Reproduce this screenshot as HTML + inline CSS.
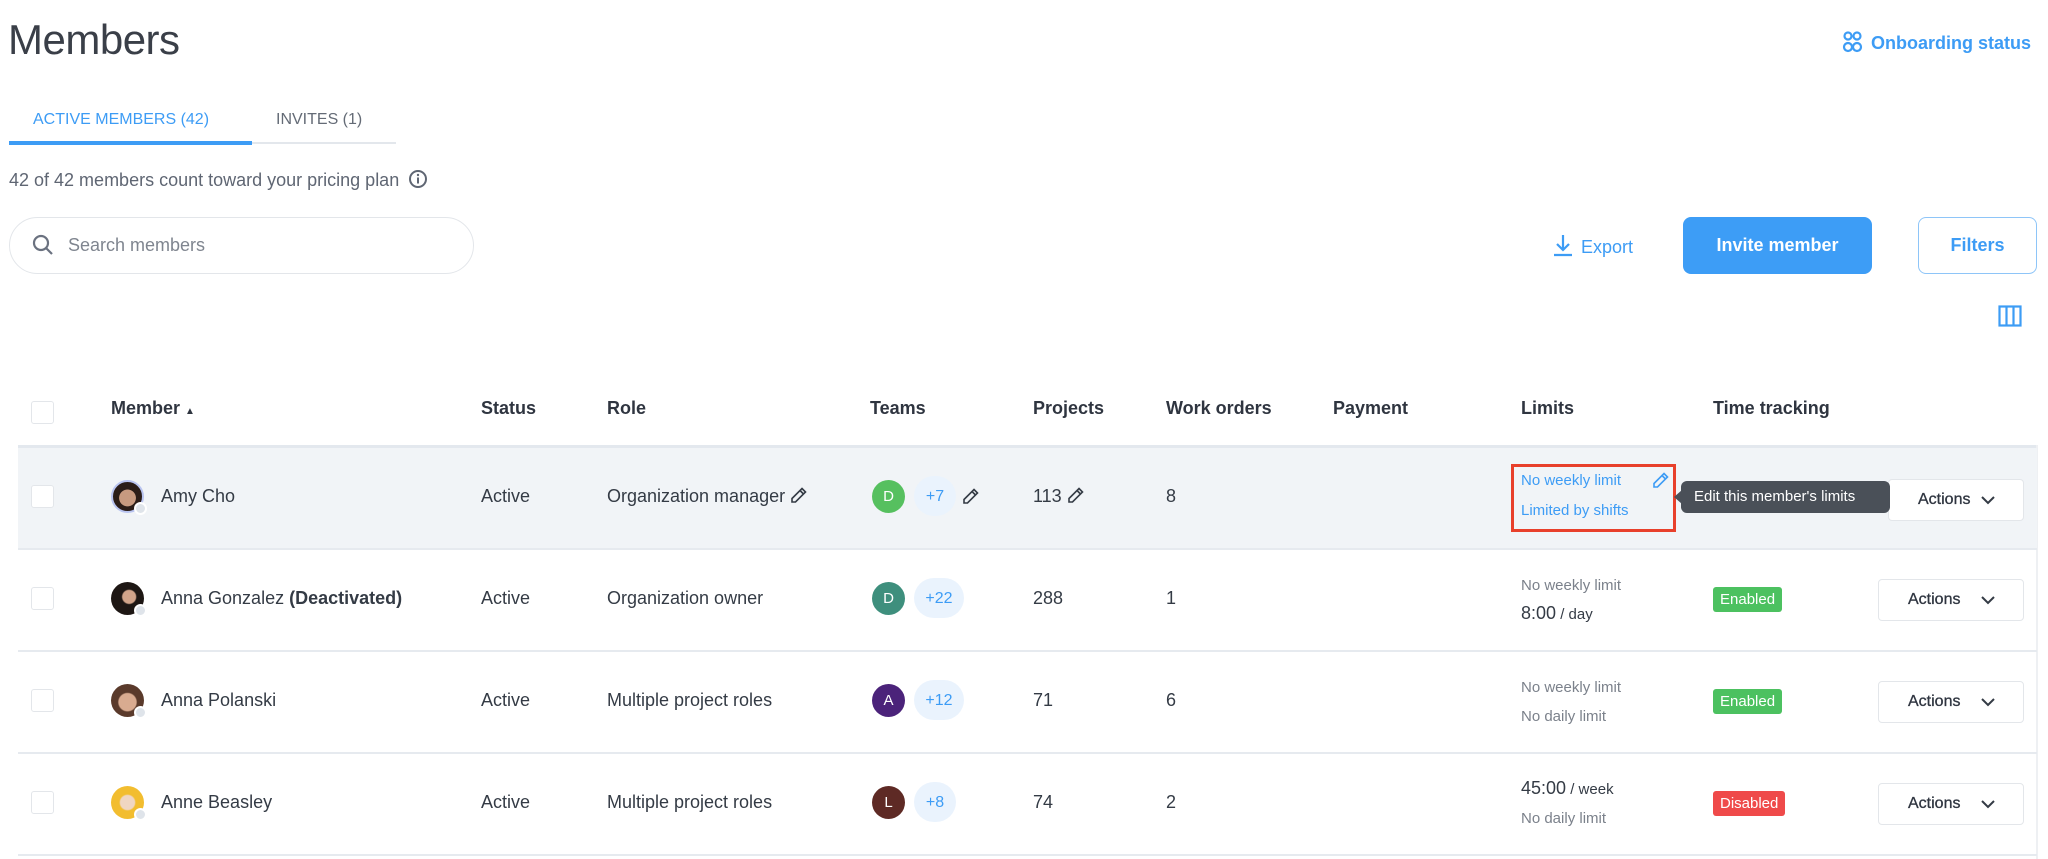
<!DOCTYPE html>
<html><head><meta charset="utf-8">
<style>
*{box-sizing:border-box;margin:0;padding:0}
body{width:2048px;height:859px;background:#fff;font-family:"Liberation Sans",Arial,sans-serif;color:#333a44;position:relative;overflow:hidden}
.a{position:absolute;white-space:nowrap}
.blue{color:#3d9cf5}
.hdr{font-size:18px;font-weight:bold;color:#2f3540;top:398px}
.row{position:absolute;left:18px;width:2019px;height:102px;border-bottom:2px solid #e6eaef}
.cb{position:absolute;left:13px;width:23px;height:23px;border:1px solid #e3e6ea;border-radius:3px;background:#fff}
.cell{position:absolute;font-size:18px;color:#343b45;white-space:nowrap}
.av{position:absolute;width:33px;height:33px;border-radius:50%}
.dot{position:absolute;width:13px;height:13px;border-radius:50%;background:#dfe4ea;border:2px solid #fff}
.tm{position:absolute;width:33px;height:33px;border-radius:50%;color:#fff;font-size:15px;text-align:center;line-height:33px}
.pill{position:absolute;height:40px;border-radius:20px;background:#eaf3fd;color:#3d9cf5;font-size:16px;text-align:center;line-height:42px}
.lim{position:absolute;font-size:15px;color:#7b818b;white-space:nowrap}
.badge{position:absolute;height:25px;border-radius:3px;color:#fff;font-size:15px;line-height:25px;padding:0 7px}
.act{position:absolute;left:1860px;width:146px;height:42px;border:1px solid #e3e6ea;border-radius:4px;background:#fff;font-size:16px;color:#2f3540;padding-left:29px;line-height:40px;-webkit-text-stroke:0.3px #2f3540}
.act svg{position:absolute;right:28px;top:15px}
.pen{display:inline-block;vertical-align:-2px}
</style></head><body>

<div class="a" style="left:8px;top:16px;font-size:42px;letter-spacing:-0.5px;color:#3a3f48">Members</div>

<div class="a blue" style="left:1841px;top:30px;font-size:18px;font-weight:bold">
<svg width="24" height="24" viewBox="0 0 24 24" style="vertical-align:-5px;margin-right:6px" fill="none" stroke="#3d9cf5" stroke-width="2.2"><circle cx="7" cy="6" r="3.5"/><circle cx="16" cy="6" r="3.5"/><circle cx="7" cy="17" r="4"/><circle cx="16" cy="17" r="4"/></svg>Onboarding status</div>

<div class="a blue" style="left:33px;top:111px;font-size:16px">ACTIVE MEMBERS (42)</div>
<div class="a" style="left:276px;top:111px;font-size:16px;color:#646b76">INVITES (1)</div>
<div class="a" style="left:9px;top:142px;width:387px;height:2px;background:#e3e7ec"></div>
<div class="a" style="left:9px;top:141px;width:243px;height:4px;background:#3d9cf5"></div>

<div class="a" style="left:9px;top:169px;font-size:18px;color:#5f6673">42 of 42 members count toward your pricing plan
<svg width="20" height="20" viewBox="0 0 20 20" style="vertical-align:-3px;margin-left:4px"><circle cx="10" cy="10" r="8" fill="none" stroke="#5f6673" stroke-width="2"/><rect x="9" y="8.5" width="2" height="6" fill="#5f6673"/><circle cx="10" cy="6" r="1.2" fill="#5f6673"/></svg></div>

<div class="a" style="left:9px;top:217px;width:465px;height:57px;border:1px solid #e3e6ea;border-radius:29px">
<svg width="22" height="22" viewBox="0 0 22 22" style="position:absolute;left:22px;top:16px" fill="none" stroke="#6b7280" stroke-width="2.2"><circle cx="9" cy="9" r="7"/><path d="M14 14l6 6"/></svg>
<span style="position:absolute;left:58px;top:17px;font-size:18px;color:#7f858f">Search members</span></div>

<div class="a blue" style="left:1551px;top:233px;font-size:18px">
<svg width="24" height="24" viewBox="0 0 24 24" style="vertical-align:-4px;margin-right:6px" fill="none" stroke="#3d9cf5" stroke-width="2.2"><path d="M12 2v15M6 11l6 6 6-6M3 22h18"/></svg>Export</div>

<div class="a" style="left:1683px;top:217px;width:189px;height:57px;border-radius:8px;background:#3d9df6;color:#fff;font-size:18px;font-weight:bold;text-align:center;line-height:57px">Invite member</div>
<div class="a blue" style="left:1918px;top:217px;width:119px;height:57px;border-radius:8px;border:1.5px solid #8ec5f8;font-size:18px;font-weight:bold;text-align:center;line-height:54px">Filters</div>

<svg class="a" style="left:1998px;top:305px" width="24" height="22" viewBox="0 0 24 22" fill="none" stroke="#3d9cf5" stroke-width="2.2"><rect x="1.5" y="1.5" width="21" height="19"/><path d="M8.5 1.5v19M15.5 1.5v19"/></svg>

<div class="cb" style="left:31px;top:401px"></div>
<div class="a hdr" style="left:111px">Member <span style="font-size:10px">▲</span></div>
<div class="a hdr" style="left:481px">Status</div>
<div class="a hdr" style="left:607px">Role</div>
<div class="a hdr" style="left:870px">Teams</div>
<div class="a hdr" style="left:1033px">Projects</div>
<div class="a hdr" style="left:1166px">Work orders</div>
<div class="a hdr" style="left:1333px">Payment</div>
<div class="a hdr" style="left:1521px">Limits</div>
<div class="a hdr" style="left:1713px">Time tracking</div>
<div class="a" style="left:18px;top:445px;width:2019px;height:3px;background:#e3e8ee"></div>
<div class="a" style="left:2036px;top:445px;width:2px;height:414px;background:#eef0f3"></div>

<div class="row" style="top:448px;background:#f1f4f7">
<div class="cb" style="top:37px"></div>
<div class="av" style="left:93px;top:32px;background:radial-gradient(circle at 50% 55%,#c79a80 0 38%,#2b1d18 40%);border:2px solid #b9c4f0"></div><div class="dot" style="left:116px;top:54px"></div>
<div class="cell" style="left:143px;top:38px">Amy Cho</div>
<div class="cell" style="left:463px;top:38px">Active</div>
<div class="cell" style="left:589px;top:38px">Organization manager <svg class="pen" width="17" height="17" viewBox="0 0 17 17" fill="none" stroke="#343b45" stroke-width="1.6"><path d="M12 1.5l3.5 3.5L5.5 15H2v-3.5z"/><path d="M10 3.5l3.5 3.5"/></svg></div>
<div class="tm" style="left:854px;top:32px;background:#56c05f">D</div>
<div class="pill" style="left:896px;top:28px;width:42px">+7</div>
<svg class="a" style="left:944px;top:40px" width="17" height="17" viewBox="0 0 17 17" fill="none" stroke="#343b45" stroke-width="1.6"><path d="M12 1.5l3.5 3.5L5.5 15H2v-3.5z"/><path d="M10 3.5l3.5 3.5"/></svg>
<div class="cell" style="left:1015px;top:38px">113 <svg class="pen" width="17" height="17" viewBox="0 0 17 17" fill="none" stroke="#343b45" stroke-width="1.6"><path d="M12 1.5l3.5 3.5L5.5 15H2v-3.5z"/><path d="M10 3.5l3.5 3.5"/></svg></div>
<div class="cell" style="left:1148px;top:38px">8</div>
<div class="a" style="left:1493px;top:16px;width:165px;height:68px;border:3px solid #e8402b"></div>
<div class="lim" style="left:1503px;top:24px;color:#3d9cf5">No weekly limit</div>
<div class="lim" style="left:1503px;top:54px;color:#3d9cf5">Limited by shifts</div>
<svg class="a" style="left:1634px;top:24px" width="17" height="17" viewBox="0 0 17 17" fill="none" stroke="#3d9cf5" stroke-width="1.6"><path d="M12 1.5l3.5 3.5L5.5 15H2v-3.5z"/><path d="M10 3.5l3.5 3.5"/></svg>
<div class="act" style="top:31px;left:1870px;width:136px">Actions<svg width="14" height="10" viewBox="0 0 14 10" fill="none" stroke="#343b45" stroke-width="2"><path d="M1 2l6 6 6-6"/></svg></div>
<div class="a" style="left:1663px;top:33px;width:209px;height:32px;border-radius:6px;background:#4a5058;color:#fff;font-size:15px;line-height:32px;padding-left:13px">Edit this member's limits</div>
<div class="a" style="left:1656px;top:42px;width:0;height:0;border-top:7px solid transparent;border-bottom:7px solid transparent;border-right:8px solid #4a5058"></div>
</div>

<div class="row" style="top:550px">
<div class="cb" style="top:37px"></div>
<div class="av" style="left:93px;top:32px;background:radial-gradient(ellipse at 55% 45%,#d2a48a 0 25%,#1e1714 30%)"></div><div class="dot" style="left:116px;top:54px"></div>
<div class="cell" style="left:143px;top:38px">Anna Gonzalez <b>(Deactivated)</b></div>
<div class="cell" style="left:463px;top:38px">Active</div>
<div class="cell" style="left:589px;top:38px">Organization owner</div>
<div class="tm" style="left:854px;top:32px;background:#3e8f7d">D</div>
<div class="pill" style="left:896px;top:28px;width:50px">+22</div>
<div class="cell" style="left:1015px;top:38px">288</div>
<div class="cell" style="left:1148px;top:38px">1</div>
<div class="lim" style="left:1503px;top:27px">No weekly limit</div>
<div class="lim" style="left:1503px;top:53px;color:#343b45"><span style="font-size:18px">8:00</span> / day</div>
<div class="badge" style="left:1695px;top:37px;background:#4cc160">Enabled</div>
<div class="act" style="top:29px">Actions<svg width="14" height="10" viewBox="0 0 14 10" fill="none" stroke="#343b45" stroke-width="2"><path d="M1 2l6 6 6-6"/></svg></div>
</div>

<div class="row" style="top:652px">
<div class="cb" style="top:37px"></div>
<div class="av" style="left:93px;top:32px;background:radial-gradient(circle at 50% 55%,#d9ab90 0 35%,#5a3a2b 40%)"></div><div class="dot" style="left:116px;top:54px"></div>
<div class="cell" style="left:143px;top:38px">Anna Polanski</div>
<div class="cell" style="left:463px;top:38px">Active</div>
<div class="cell" style="left:589px;top:38px">Multiple project roles</div>
<div class="tm" style="left:854px;top:32px;background:#4b237a">A</div>
<div class="pill" style="left:896px;top:28px;width:50px">+12</div>
<div class="cell" style="left:1015px;top:38px">71</div>
<div class="cell" style="left:1148px;top:38px">6</div>
<div class="lim" style="left:1503px;top:27px">No weekly limit</div>
<div class="lim" style="left:1503px;top:56px">No daily limit</div>
<div class="badge" style="left:1695px;top:37px;background:#4cc160">Enabled</div>
<div class="act" style="top:29px">Actions<svg width="14" height="10" viewBox="0 0 14 10" fill="none" stroke="#343b45" stroke-width="2"><path d="M1 2l6 6 6-6"/></svg></div>
</div>

<div class="row" style="top:754px">
<div class="cb" style="top:37px"></div>
<div class="av" style="left:93px;top:32px;background:radial-gradient(circle at 50% 50%,#f0d6c2 0 30%,#f2bd2f 36%)"></div><div class="dot" style="left:116px;top:54px"></div>
<div class="cell" style="left:143px;top:38px">Anne Beasley</div>
<div class="cell" style="left:463px;top:38px">Active</div>
<div class="cell" style="left:589px;top:38px">Multiple project roles</div>
<div class="tm" style="left:854px;top:32px;background:#5e2a25">L</div>
<div class="pill" style="left:896px;top:28px;width:42px">+8</div>
<div class="cell" style="left:1015px;top:38px">74</div>
<div class="cell" style="left:1148px;top:38px">2</div>
<div class="lim" style="left:1503px;top:24px;color:#343b45"><span style="font-size:18px">45:00</span> / week</div>
<div class="lim" style="left:1503px;top:56px">No daily limit</div>
<div class="badge" style="left:1695px;top:37px;background:#ef4a4a">Disabled</div>
<div class="act" style="top:29px">Actions<svg width="14" height="10" viewBox="0 0 14 10" fill="none" stroke="#343b45" stroke-width="2"><path d="M1 2l6 6 6-6"/></svg></div>
</div>

</body></html>
